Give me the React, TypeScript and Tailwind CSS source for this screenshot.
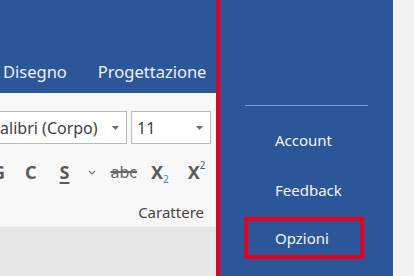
import React from "react";

const font = { fontFamily: '"Noto Sans", "Open Sans", sans-serif' };

function Caret({ className = "" }: { className?: string }) {
  return (
    <svg width="7" height="4" viewBox="0 0 7 4" className={className}>
      <path d="M0 0 H7 L3.5 4 Z" fill="#6a6a6a" />
    </svg>
  );
}

export default function App() {
  return (
    <div className="flex h-[276px] w-[414px] overflow-hidden bg-[#f3f3f3]" style={font}>
      {/* left: Word ribbon */}
      <div className="flex w-[216px] shrink-0 flex-col overflow-hidden">
        <div className="flex h-[93px] shrink-0 items-end bg-[#2b579a] pb-[8px] text-[16.5px] text-[#eef2f8]">
          <span className="ml-[3px]">Disegno</span>
          <span className="ml-[31px] whitespace-nowrap">Progettazione</span>
        </div>
        <div className="flex h-[134px] shrink-0 flex-col bg-[#f8f8f8] text-[#404040]">
          <div className="mt-[18px] flex items-center">
            <div className="ml-[-30px] flex h-[33px] w-[157px] shrink-0 items-center border border-[#b9b9b9] bg-white pl-[19px] pr-[7px] text-[16px]">
              <span className="flex-1 whitespace-nowrap">Calibri (Corpo)</span>
              <Caret />
            </div>
            <div className="ml-[4px] flex h-[33px] w-[80px] shrink-0 items-center border border-[#b9b9b9] bg-white pl-[5px] pr-[7px] text-[16px]">
              <span className="flex-1">11</span>
              <Caret />
            </div>
          </div>
          <div className="mt-[13px] flex h-[30px] items-center font-bold text-[#5a5a5a] text-[18px]">
            <span className="ml-[-8px] w-[11px]">G</span>
            <span className="ml-[22px]">C</span>
            <span className="ml-[23px] underline decoration-[2px] underline-offset-[3px]">S</span>
            <svg width="8" height="5" viewBox="0 0 8 5" className="ml-[19px]">
              <path d="M1 1 L4 4 L7 1" stroke="#777" strokeWidth="1.2" fill="none" />
            </svg>
            <span className="ml-[14px] text-[16px] font-normal text-[#666] line-through decoration-[1.5px]">abc</span>
            <span className="ml-[14px] flex items-end">
              X<span className="text-[10px] font-normal text-[#3b7fc4] leading-none mb-[2px]">2</span>
            </span>
            <span className="ml-[19px] flex items-start">
              X<span className="text-[10px] font-normal text-[#555] leading-none mt-[1px]">2</span>
            </span>
          </div>
          <div className="mt-auto mb-[2px] flex justify-end pr-[12px] text-[15px] text-[#444]">
            <span className="leading-[26px]">Carattere</span>
          </div>
        </div>
        <div className="flex-1 border-t border-[#e0e0e0] bg-[#e6e6e6]" />
      </div>

      {/* red marker line */}
      <div className="w-[4px] shrink-0 bg-[#e8001c]" />

      {/* blue backstage panel */}
      <div className="flex w-[173px] shrink-0 flex-col bg-[#2b579a] text-[15px] text-[#f3f5fa]">
        <div className="ml-[25px] mt-[105px] h-px w-[123px] bg-[#7ea3dc]" />
        <div className="flex h-[49px] items-center pl-[55px] mt-[10px]">Account</div>
        <div className="flex h-[50px] items-center pl-[55px]">Feedback</div>
        <div className="ml-[24px] mt-[2px] flex h-[42px] w-[120px] items-center border-4 border-[#e8001c] pl-[27px]">
          Opzioni
        </div>
      </div>

      {/* right grey strip */}
      <div className="flex-1 border-l-2 border-[#fafafa] bg-[#f2f2f2]" />
    </div>
  );
}
